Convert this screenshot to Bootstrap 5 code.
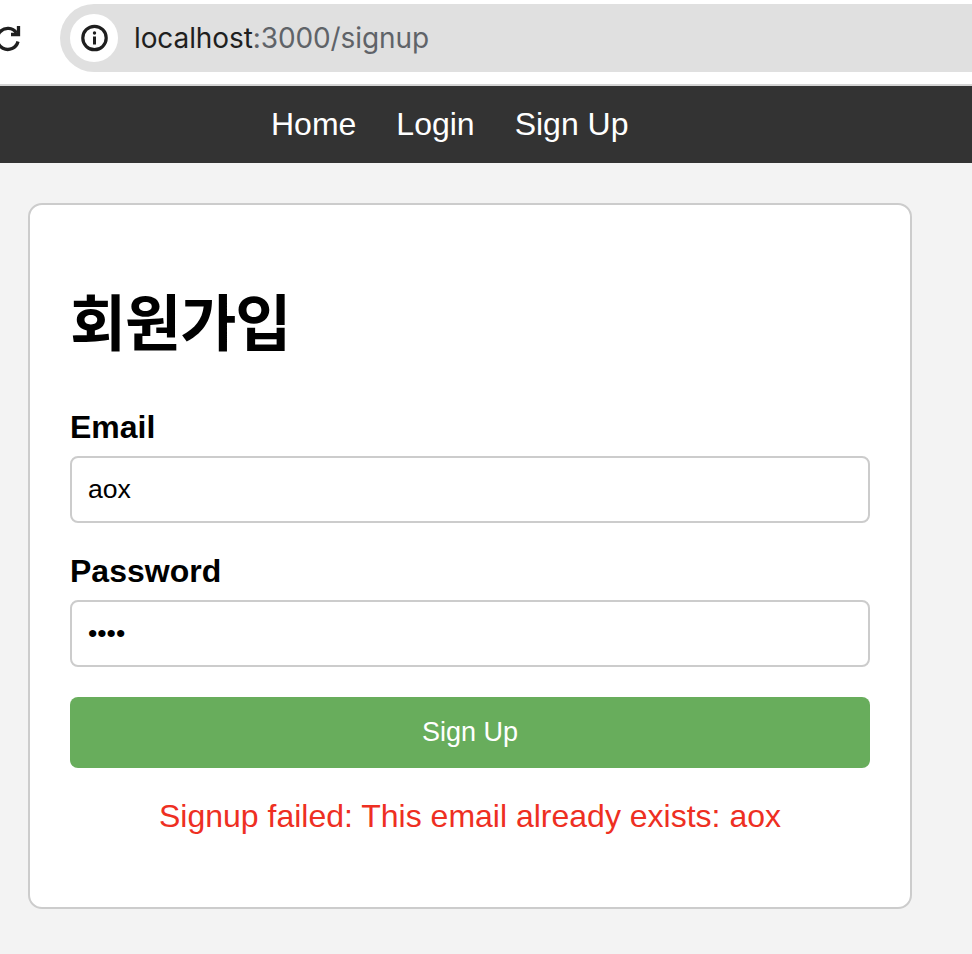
<!DOCTYPE html>
<html lang="ko">
<head>
<meta charset="utf-8">
<title>Sign Up</title>
<link href="https://cdn.jsdelivr.net/npm/bootstrap@5.3.0/dist/css/bootstrap.min.css" rel="stylesheet">
<style>
html, body { height: 100%; }
body { background: #f3f3f3; font-family: "Liberation Sans", "Noto Sans CJK KR", sans-serif; color: #000; overflow: hidden; }
.chrome-bar { height: 86px; background: #fff; border-bottom: 2px solid #d4d4d4; padding-top: 4px; }
.reload-ico { width: 34px; height: 34px; margin-left: -12px; margin-top: 17px; flex: none; }
.url-pill { height: 68px; flex: 1; margin-left: 38px; background: #e0e0e0; border-radius: 34px 0 0 34px; padding-left: 10px; }
.info-chip { width: 48px; height: 48px; border-radius: 50%; background: #fff; flex: none; }
.url-text { font-family: Inter, "Liberation Sans", sans-serif; font-size: 28px; color: #1f1f1f; margin-left: 16px; letter-spacing: -.1px; }
.url-dim { color: #5f6368; }
.top-nav { height: 77px; background: #333; padding: 0 0 2px 271px; gap: 40px; }
.top-nav a { color: #fff; font-size: 32px; text-decoration: none; line-height: 1; }
.signup-box { width: 884px; height: 706px; margin: 40px 0 0 28px; background: #fff; border: 2px solid #ccc; border-radius: 14px; padding: 84px 40px 0; }
.signup-title { font-size: 61px; font-weight: 700; line-height: 72px; margin: 0 0 48px; letter-spacing: -1px; }
.field-label { display: block; font-size: 32px; font-weight: 700; line-height: 36px; margin-bottom: 11px; }
.field-input { display: block; width: 100%; height: 67px; border: 2px solid #ccc; border-radius: 8px; padding: 0 16px; font-size: 26.6px; color: #000; background: #fff; font-family: "Liberation Sans", sans-serif; outline: none; }
.field-gap { margin-bottom: 30px; }
.go-btn { display: block; width: 100%; height: 71px; background: #68ad5c; border: 0; border-radius: 8px; color: #fff; font-size: 27px; font-family: "Liberation Sans", sans-serif; }
.fail-msg { color: #ee2f22; font-size: 32px; line-height: 36px; text-align: center; margin: 30px 0 0; }
</style>
</head>
<body>
<div class="chrome-bar d-flex align-items-start overflow-hidden">
  <svg class="reload-ico" viewBox="0 0 34 34" fill="none" stroke="#1f1f1f" stroke-width="3.3"><path d="M28.5 12A10.5 10.5 0 1 0 30 20.5"/><path d="M30.5 5V13.5H23"/></svg>
  <div class="url-pill d-flex align-items-center">
    <div class="info-chip d-flex align-items-center justify-content-center">
      <svg width="28" height="28" viewBox="0 0 28 28" fill="none"><circle cx="14.5" cy="14" r="11.7" stroke="#1f1f1f" stroke-width="3.2"/><rect x="13" y="12.5" width="3" height="8" fill="#1f1f1f"/><circle cx="14.5" cy="9" r="1.7" fill="#1f1f1f"/></svg>
    </div>
    <span class="url-text">localhost<span class="url-dim">:3000/signup</span></span>
  </div>
</div>
<nav class="top-nav d-flex align-items-center">
  <a href="#">Home</a>
  <a href="#">Login</a>
  <a href="#">Sign Up</a>
</nav>
<main class="signup-box">
  <h1 class="signup-title">회원가입</h1>
  <form>
    <div class="field-gap">
      <label class="field-label" for="em">Email</label>
      <input class="field-input" id="em" type="text" value="aox">
    </div>
    <div class="field-gap">
      <label class="field-label" for="pw">Password</label>
      <input class="field-input" id="pw" type="password" value="aoxx">
    </div>
    <button class="go-btn" type="button">Sign Up</button>
  </form>
  <p class="fail-msg">Signup failed: This email already exists: aox</p>
</main>
<script src="https://cdn.jsdelivr.net/npm/bootstrap@5.3.0/dist/js/bootstrap.bundle.min.js"></script>
</body>
</html>
